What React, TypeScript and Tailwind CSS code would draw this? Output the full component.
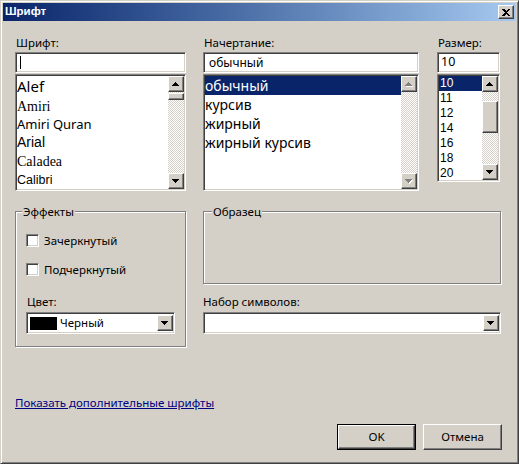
import React from "react";

// classic 3D edges
const SUNKEN =
  "border border-t-[#808080] border-l-[#808080] border-b-white border-r-white shadow-[inset_1px_1px_0_#404040,inset_-1px_-1px_0_#d4d0c8] p-px";
const RAISED =
  "border border-t-white border-l-white border-b-[#404040] border-r-[#404040] shadow-[inset_-1px_-1px_0_#808080] bg-[#d4d0c8]";
const CHECKER =
  "bg-[image:conic-gradient(#fff_25%,#d4d0c8_0_50%,#fff_0_75%,#d4d0c8_0)] bg-[length:2px_2px]";
const ETCHED = "border border-[#808080] shadow-[inset_1px_1px_0_#fff,1px_1px_0_#fff]";

const UP = "M3 0h1v1h1v1h1v1h1v1H0V3h1V2h1V1h1z";
const DOWN = "M0 0h7v1H6v1H5v1H4v1H3V3H2V2H1V1H0z";

function Arrow({ dir, disabled = false }: { dir: "up" | "down"; disabled?: boolean }) {
  const d = dir === "up" ? UP : DOWN;
  return (
    <div className={`${RAISED} flex h-[16px] w-[16px] shrink-0 items-center justify-center`}>
      <svg width="8" height="5" viewBox="0 0 8 5" shapeRendering="crispEdges">
        {disabled && <path d={d} fill="#fff" transform="translate(1,1)" />}
        <path d={d} fill={disabled ? "#808080" : "#000"} />
      </svg>
    </div>
  );
}

function ScrollBar({ thumb, disabled = false }: { thumb?: "font" | "size"; disabled?: boolean }) {
  return (
    <div className="flex w-[16px] shrink-0 flex-col">
      <Arrow dir="up" disabled={disabled} />
      <div className={`flex flex-1 flex-col ${CHECKER}`}>
        {thumb === "font" && <div className={`${RAISED} mt-px h-[7px] w-[16px]`} />}
        {thumb === "size" && <div className={`${RAISED} mt-[9px] h-[32px] w-[16px]`} />}
      </div>
      <Arrow dir="down" disabled={disabled} />
    </div>
  );
}

function Combo({ className, children }: { className: string; children?: React.ReactNode }) {
  return (
    <div className={`${SUNKEN} flex h-[22px] items-center bg-white ${className}`}>
      <div className="flex flex-1 items-center">{children}</div>
      <Arrow dir="down" />
    </div>
  );
}

function CheckBox({ label }: { label: string }) {
  return (
    <div className="flex h-[13px] items-center gap-[5px]">
      <div className={`${SUNKEN} h-[13px] w-[13px] bg-white`} />
      <span className="leading-[14px]">{label}</span>
    </div>
  );
}

const FONTS = [
  { name: "Alef", h: "h-[20px]", cls: "font-['Noto_Sans',sans-serif] text-[15px]" },
  { name: "Amiri", h: "h-[20px]", cls: "font-['Liberation_Serif',serif] text-[14px]" },
  { name: "Amiri Quran", h: "h-[17px]", cls: "font-['Noto_Sans',sans-serif] text-[13px]" },
  { name: "Arial", h: "h-[19px]", cls: "font-['Liberation_Sans',Arial,sans-serif] text-[14px]" },
  { name: "Caladea", h: "h-[19px]", cls: "font-['Liberation_Serif',serif] text-[14px]" },
  { name: "Calibri", h: "h-[18px]", cls: "font-['Liberation_Sans',Arial,sans-serif] text-[12.5px]" },
];

const STYLES = ["обычный", "курсив", "жирный", "жирный курсив"];
const SIZES = ["10", "11", "12", "14", "16", "18", "20"];

export default function App() {
  return (
    <div className="h-[464px] w-[519px] overflow-hidden bg-[#d4d0c8] font-['Noto_Sans',sans-serif] text-[11.5px] text-black">
      <div className="flex h-full w-full flex-col border border-t-[#d4d0c8] border-l-[#d4d0c8] border-b-[#404040] border-r-[#404040] p-[2px] shadow-[inset_1px_1px_0_#fff,inset_-1px_-1px_0_#808080]">
        {/* title bar */}
        <div className="flex h-[18px] shrink-0 items-center justify-between bg-linear-to-r from-[#0a246a] to-[#a6caf0] pl-[2px] pr-[2px]">
          <span className="font-['Liberation_Sans',Arial,sans-serif] text-[11.5px] font-bold text-white">Шрифт</span>
          <div className={`${RAISED} flex h-[14px] w-[16px] items-center justify-center`}>
            <svg width="8" height="7" viewBox="0 0 8 7" shapeRendering="crispEdges">
              <path d="M0 0h2l2 2 2-2h2L5 3.5 8 7H6L4 5 2 7H0l3-3.5z" fill="#000" />
            </svg>
          </div>
        </div>

        <div className="flex flex-1 flex-col pl-[12px] pt-[15px]">
          {/* top row: font / style / size */}
          <div className="flex">
            <div className="flex w-[171px] flex-col">
              <span className="h-[14px] pl-px leading-[14px]">Шрифт:</span>
              <div className={`${SUNKEN} mt-[2px] flex h-[21px] items-center bg-white pl-[4px]`}>
                <div className="h-[13px] w-px bg-black" />
              </div>
              <div className={`${SUNKEN} mt-px flex h-[117px] bg-white`}>
                <div className="flex flex-1 flex-col overflow-hidden">
                  {FONTS.map((f) => (
                    <div key={f.name} className={`flex shrink-0 items-center whitespace-nowrap ${f.h} ${f.cls}`}>
                      {f.name}
                    </div>
                  ))}
                </div>
                <ScrollBar thumb="font" />
              </div>
            </div>

            <div className="ml-[17px] flex w-[216px] flex-col">
              <span className="h-[14px] pl-px leading-[14px]">Начертание:</span>
              <div className={`${SUNKEN} mt-[2px] flex h-[21px] items-center bg-white pl-[5px] text-[12px]`}>обычный</div>
              <div className={`${SUNKEN} mt-px flex h-[117px] bg-white`}>
                <div className="flex flex-1 flex-col text-[14px]">
                  {STYLES.map((s, i) => (
                    <div
                      key={s}
                      className={`h-[19px] leading-[19px] ${i === 0 ? "bg-[#0a246a] text-white" : ""}`}
                    >
                      {s}
                    </div>
                  ))}
                </div>
                <ScrollBar disabled />
              </div>
            </div>

            <div className="ml-[18px] flex w-[63px] flex-col">
              <span className="h-[14px] pl-px leading-[14px]">Размер:</span>
              <div className={`${SUNKEN} mt-[2px] flex h-[21px] items-center bg-white pl-[3px] text-[12.5px]`}>10</div>
              <div className={`${SUNKEN} mt-px flex h-[108px] bg-white`}>
                <div className="flex flex-1 flex-col font-['Liberation_Sans',Arial,sans-serif] text-[12px]">
                  {SIZES.map((s, i) => (
                    <div
                      key={s}
                      className={`h-[15px] pl-px leading-[15px] ${i === 0 ? "bg-[#0a246a] text-white" : ""}`}
                    >
                      {s}
                    </div>
                  ))}
                </div>
                <ScrollBar thumb="size" />
              </div>
            </div>
          </div>

          {/* middle row: effects / sample / charset */}
          <div className="mt-[20px] flex">
            <div className={`${ETCHED} relative flex h-[136px] w-[171px] flex-col pl-[10px] pt-[22px]`}>
              <span className="absolute -top-[7px] left-[6px] bg-[#d4d0c8] px-px leading-[14px]">Эффекты</span>
              <CheckBox label="Зачеркнутый" />
              <div className="mt-[16px]">
                <CheckBox label="Подчеркнутый" />
              </div>
              <span className="mt-[19px] h-[14px] pl-px leading-[14px]">Цвет:</span>
              <Combo className="mt-[3px] w-[149px]">
                <div className="ml-[2px] h-[13px] w-[27px] bg-black" />
                <span className="ml-[3px] leading-[14px]">Черный</span>
              </Combo>
            </div>

            <div className="ml-[17px] flex w-[298px] flex-col">
              <div className={`${ETCHED} relative h-[73px]`}>
                <span className="absolute -top-[7px] left-[8px] bg-[#d4d0c8] px-px leading-[14px]">Образец</span>
              </div>
              <span className="mt-[11px] h-[14px] leading-[14px]">Набор символов:</span>
              <Combo className="mt-[3px] w-[298px]" />
            </div>
          </div>

          {/* link */}
          <div className="mt-[49px] h-[14px] leading-[14px]">
            <a href="#" className="text-[#000080] underline">
              Показать дополнительные шрифты
            </a>
          </div>

          {/* buttons */}
          <div className="mt-[14px] flex justify-end gap-[7px] pr-[14px]">
            <div className="h-[26px] w-[79px] border border-black">
              <button className={`${RAISED} h-full w-full`}>OK</button>
            </div>
            <button className={`${RAISED} h-[26px] w-[79px]`}>Отмена</button>
          </div>
        </div>
      </div>
    </div>
  );
}
